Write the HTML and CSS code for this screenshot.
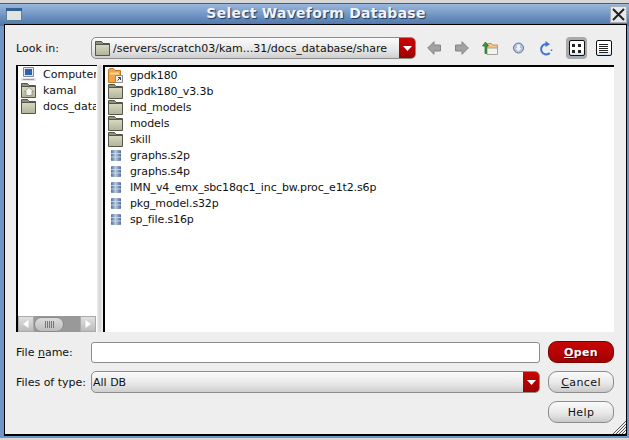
FILE: index.html
```html
<!DOCTYPE html>
<html lang="en">
<head>
  <meta charset="UTF-8">
  <title>Select Waveform Database</title>
  <link rel="stylesheet" href="styles.css">
</head>
<body>
  <svg class="defs" width="0" height="0">
    <defs>
      <linearGradient id="folderFill" x1="0" y1="0" x2="0" y2="1">
        <stop offset="0" stop-color="#d6d7bf"/>
        <stop offset="1" stop-color="#b3b59a"/>
      </linearGradient>
      <linearGradient id="dbFill" x1="0" y1="0" x2="1" y2="0">
        <stop offset="0" stop-color="#4d6c96"/>
        <stop offset=".45" stop-color="#b9cbe0"/>
        <stop offset="1" stop-color="#4d6c96"/>
      </linearGradient>
    </defs>
    <symbol id="folder" viewBox="0 0 15 15">
      <path d="M.5 14.500V.5h6l1.500 2h6.500v12z" fill="#8f9080" stroke="#55564a"/>
      <path d="M1 4h13v10H1z" fill="url(#folderFill)"/>
      <path d="M1 3.500h13" stroke="#55564a"/>
    </symbol>
    <symbol id="db" viewBox="0 0 10 11">
      <path d="M0 .5C0-.2 10-.2 10 .5v10c0 .7-10 .7-10 0z" fill="url(#dbFill)"/>
      <path d="M0 3.500h10M0 7h10" stroke="#d3deea" stroke-width=".8"/>
    </symbol>
    <symbol id="caret" viewBox="0 0 9 5">
      <path d="M0 0h9L4.500 5z" fill="#fff"/>
    </symbol>
  </svg>

  <div class="window">
    <div class="titlebar">
      <svg class="win-icon" width="16" height="13" viewBox="0 0 16 13">
        <path d="M.5.500h15v12H.5z" fill="#dfe5e0" stroke="#5f7f9f"/>
        <path d="M0 0h16v3H0z" fill="#34608f"/>
      </svg>
      <span class="title">Select Waveform Database</span>
      <span class="close">
        <svg width="13" height="13" viewBox="0 0 13 13"><path d="M1 1l11 11M12 1L1 12" stroke="#222" stroke-width="2"/></svg>
      </span>
    </div>

    <div class="dialog">
      <div class="toolbar">
        <label class="label lookin-label">Look in:</label>
        <div class="combo path-combo">
          <svg class="combo-folder" width="15" height="15"><use href="#folder"/></svg>
          <span class="combo-text">/servers/scratch03/kam...31/docs_database/share</span>
          <span class="combo-arrow"><svg width="9" height="5"><use href="#caret"/></svg></span>
        </div>
        <div class="tools">
          <span class="tool">
            <svg width="14" height="14" viewBox="0 0 14 14"><path d="M.7 7L7 .7V4h6.500v6H7v3.300z" fill="#a2a2a2" stroke="#858585"/></svg>
          </span>
          <span class="tool">
            <svg width="14" height="14" viewBox="0 0 14 14"><path d="M13.300 7L7 .7V4H.5v6H7v3.300z" fill="#a2a2a2" stroke="#858585"/></svg>
          </span>
          <span class="tool">
            <svg width="16" height="13" viewBox="0 0 16 13">
              <path d="M5.500 1.500h4l1 1.500h5v9h-10z" fill="#f3c486" stroke="#b09a7a"/>
              <path d="M5 6h10.500v6.500H5z" fill="#f3f3ee" stroke="#a5a59a"/>
              <path d="M3 11.500V4H.5L3.500 0 6.500 4H4.500v7.500z" fill="#3e9a35" stroke="#1f6b1c" stroke-width=".7"/>
            </svg>
          </span>
          <span class="tool">
            <svg width="11" height="12" viewBox="0 0 11 12">
              <circle cx="5.500" cy="6" r="5" fill="#b4c2da" stroke="#5f76a0"/>
              <path d="M4 2.500h3v3.500h1.500L5.500 9.500 2.500 6H4z" fill="#eef1f7"/>
            </svg>
          </span>
          <span class="tool">
            <svg width="14" height="15" viewBox="0 0 14 15">
              <path d="M10.800 12A5.200 5.200 0 1 1 7.500 3" fill="none" stroke="#3f74d2" stroke-width="2"/>
              <path d="M6.500 0l4.500 3.200L6.500 6z" fill="#3f74d2"/>
              <path d="M12.500 8.500v1.500" stroke="#3f74d2" stroke-width="1.500"/>
            </svg>
          </span>
          <span class="view-btn active">
            <span class="view-inner">
              <svg width="11" height="11" viewBox="0 0 11 11"><path d="M1 1h3v3H1zM7 1h3v3H7zM1 7h3v3H1zM7 7h3v3H7z" fill="#222"/></svg>
            </span>
          </span>
          <span class="view-btn">
            <span class="view-inner">
              <svg width="11" height="11" viewBox="0 0 11 11"><path d="M1 1.500h9M1 3.500h9M1 5.500h9M1 7.500h9M1 9.500h9" stroke="#222"/></svg>
            </span>
          </span>
        </div>
      </div>

      <div class="browser">
        <div class="places">
          <ul class="places-list">
            <li class="row">
              <svg class="row-icon" width="15" height="15" viewBox="0 0 15 15">
                <path d="M2.500 .5h10v9h-10z" fill="#dfe5ee" stroke="#7d8ba0"/>
                <path d="M4 2h7v6H4z" fill="#2e62ad"/>
                <path d="M0 11h15v3H0z" fill="#e4e4e4"/>
                <path d="M2 12.500h11" stroke="#999"/>
              </svg>
              <span class="clip">Computer</span>
            </li>
            <li class="row">
              <svg class="row-icon" width="15" height="15"><use href="#folder"/></svg>
              <svg class="home-mark" width="10" height="9" viewBox="0 0 10 9"><path d="M5 .5L9.500 4.500H8V8.500H2V4.500H.5z" fill="#f4f4ef" stroke="#77786a" stroke-width=".6"/></svg>
              <span class="clip">kamal</span>
            </li>
            <li class="row">
              <svg class="row-icon" width="15" height="15"><use href="#folder"/></svg>
              <span class="clip">docs_database</span>
            </li>
          </ul>
          <div class="hscroll">
            <span class="scroll-btn"><svg width="6" height="8" viewBox="0 0 6 8"><path d="M5.500 0v8L0 4z" fill="#fff"/></svg></span>
            <span class="scroll-track"><span class="scroll-thumb"><span class="grip"></span></span></span>
            <span class="scroll-btn"><svg width="6" height="8" viewBox="0 0 6 8"><path d="M.5 0v8L6 4z" fill="#fff"/></svg></span>
          </div>
        </div>
        <div class="splitter"></div>
        <ul class="files">
          <li class="row">
            <svg class="row-icon" width="15" height="15" viewBox="0 0 15 15">
              <path d="M.5 14.500V1.500L1.500.5h4L7 2.500h5.500v12z" fill="#f0a54a" stroke="#c47a1f"/>
              <path d="M2 4.500h9v2H2z" fill="#fbd9a8"/>
              <path d="M7.500 7.500h7v7h-7z" fill="#f2f2f2" stroke="#8a8a8a"/>
              <path d="M9.500 12.500l3-3M10 9.500h2.500V12" stroke="#444" fill="none"/>
            </svg>
            gpdk180
          </li>
          <li class="row"><svg class="row-icon" width="15" height="15"><use href="#folder"/></svg>gpdk180_v3.3b</li>
          <li class="row"><svg class="row-icon" width="15" height="15"><use href="#folder"/></svg>ind_models</li>
          <li class="row"><svg class="row-icon" width="15" height="15"><use href="#folder"/></svg>models</li>
          <li class="row"><svg class="row-icon" width="15" height="15"><use href="#folder"/></svg>skill</li>
          <li class="row"><span class="db-cell"><svg width="10" height="11"><use href="#db"/></svg></span>graphs.s2p</li>
          <li class="row"><span class="db-cell"><svg width="10" height="11"><use href="#db"/></svg></span>graphs.s4p</li>
          <li class="row"><span class="db-cell"><svg width="10" height="11"><use href="#db"/></svg></span>IMN_v4_emx_sbc18qc1_inc_bw.proc_e1t2.s6p</li>
          <li class="row"><span class="db-cell"><svg width="10" height="11"><use href="#db"/></svg></span>pkg_model.s32p</li>
          <li class="row"><span class="db-cell"><svg width="10" height="11"><use href="#db"/></svg></span>sp_file.s16p</li>
        </ul>
      </div>

      <div class="form">
        <label class="label">File <u>n</u>ame:</label>
        <input class="name-input" type="text">
        <button class="btn btn-primary"><u>O</u>pen</button>

        <label class="label">Files of type:</label>
        <div class="combo type-combo">
          <span class="combo-text">All DB</span>
          <span class="combo-arrow"><svg width="9" height="5"><use href="#caret"/></svg></span>
        </div>
        <button class="btn"><u>C</u>ancel</button>

        <button class="btn btn-help">Help</button>
      </div>
      <svg class="resize" width="14" height="13" viewBox="0 0 14 13"><path d="M14 0L1 13M14 3L4 13M14 6l-7 7M14 9l-4 4M14 12l-1 1" stroke="#555" fill="none"/></svg>
    </div>
  </div>
</body>
</html>
```
FILE: styles.css
```css
* {
  box-sizing: border-box;
}

html, body {
  margin: 0;
  height: 100%;
}

body {
  font-family: "DejaVu Sans", sans-serif;
  font-size: 11px;
  color: #111;
  background: #d8d8d8;
  overflow: hidden;
}

.defs {
  position: absolute;
}

.window {
  height: 435px;
  margin-top: 3px;
  display: flex;
  flex-direction: column;
  background: linear-gradient(#9ab7dd, #4a74a8 22px, #6f97c6 22px);
  padding: 0 2px 2px 4px;
  border-top: 1px solid #3f5f88;
}

.titlebar {
  height: 20px;
  flex: none;
  display: flex;
  align-items: center;
  padding: 0 0 0 2px;
}

.win-icon {
  flex: none;
}

.title {
  flex: 1;
  text-align: center;
  font-size: 14px;
  font-weight: bold;
  letter-spacing: .25px;
  color: #f0f4fa;
  text-shadow: 1px 1px 1px #1f3557;
  margin-bottom: 2px;
}

.close {
  width: 17px;
  height: 17px;
  margin-top: 1px;
  flex: none;
  display: flex;
  align-items: center;
  justify-content: center;
  background: #e6e8eb;
  border: 1px solid #a5adb7;
}

.dialog {
  position: relative;
  width: 623px;
  height: 412px;
  background: #eee;
  border: 1px solid #000;
  border-width: 1px 1px 2px 1px;
  padding: 12px 12px 0 11px;
}

.toolbar {
  display: flex;
  align-items: center;
  height: 22px;
}

.label {
  display: block;
}

.lookin-label {
  width: 75px;
  flex: none;
}

.combo {
  display: flex;
  align-items: center;
  height: 22px;
  border: 1px solid #8c8c8c;
  border-radius: 5px;
  background: linear-gradient(#fafafa, #e9e9e9 55%, #cfcfcf);
  overflow: hidden;
}

.path-combo {
  width: 325px;
  flex: none;
  padding-left: 3px;
}

.combo-folder {
  flex: none;
  margin-right: 3px;
}

.combo-text {
  flex: 1;
  white-space: nowrap;
  overflow: hidden;
}

.combo-arrow {
  width: 16px;
  height: 100%;
  flex: none;
  display: flex;
  align-items: center;
  justify-content: center;
  background: linear-gradient(#c80404, #9c0000);
}

.tools {
  flex: 1;
  display: flex;
  align-items: center;
  padding-left: 4px;
}

.tool {
  width: 28px;
  flex: none;
  display: flex;
  justify-content: center;
}

.view-btn {
  width: 21px;
  height: 22px;
  flex: none;
  display: flex;
  align-items: center;
  justify-content: center;
  margin: 0 0 0 6px;
  border-radius: 4px;
}

.view-btn.active {
  background: #a9a9a9;
}

.view-inner {
  width: 16px;
  height: 16px;
  display: flex;
  align-items: center;
  justify-content: center;
  background: linear-gradient(#fff 70%, #cfe0f5);
  border: 1px solid #111;
  border-radius: 2px;
}

.browser {
  display: flex;
  height: 267px;
  margin-top: 6px;
}

.places {
  width: 81px;
  flex: none;
  display: flex;
  flex-direction: column;
  background: #fff;
  border-left: 2px solid #000;
  border-top: 1px solid #000;
}

.places-list {
  flex: 1;
  list-style: none;
  margin: 0 1px 0 0;
  padding: 0 0 0 3px;
  overflow: hidden;
}

.files {
  flex: 1;
  list-style: none;
  margin: 0;
  padding: 0 0 0 3px;
  letter-spacing: -.12px;
  background: #fff;
  border-left: 2px solid #000;
  border-top: 2px solid #000;
}

.row {
  position: relative;
  display: flex;
  align-items: center;
  height: 16px;
  white-space: nowrap;
}

.row-icon {
  flex: none;
  margin-right: 7px;
}

.clip {
  overflow: hidden;
}

.home-mark {
  position: absolute;
  left: 3px;
  top: 5px;
}

.db-cell {
  width: 22px;
  flex: none;
  padding-left: 3px;
  display: flex;
}

.splitter {
  width: 6px;
  flex: none;
  background: linear-gradient(90deg, #eee, #d4d4d4 50%, #f4f4f4);
}

.hscroll {
  display: flex;
  height: 16px;
  flex: none;
  margin-right: 1px;
}

.scroll-btn {
  width: 16px;
  flex: none;
  display: flex;
  align-items: center;
  justify-content: center;
  background: linear-gradient(#e0e0e0, #bbb);
  border: 1px solid #aaa;
}

.scroll-track {
  flex: 1;
  background: #999;
  display: flex;
  align-items: center;
}

.scroll-thumb {
  width: 30px;
  height: 15px;
  display: flex;
  align-items: center;
  justify-content: center;
  background: linear-gradient(#ddd, #bcbcbc);
  border: 1px solid #8a8a8a;
  border-radius: 8px;
}

.grip {
  width: 9px;
  height: 7px;
  background: repeating-linear-gradient(90deg, #777 0 1px, transparent 1px 2px);
}

.form {
  display: grid;
  grid-template-columns: 67px 449px 66px;
  grid-auto-rows: 22px;
  gap: 8px;
  align-items: center;
  margin-top: 9px;
}

.form .label {
  white-space: nowrap;
}

.name-input {
  height: 21px;
  width: 449px;
  margin: 0;
  background: #fff;
  border: 1px solid #8c8c8c;
  border-radius: 3px;
}

.type-combo {
  padding-left: 1px;
}

.btn {
  height: 22px;
  width: 66px;
  padding: 0;
  font: inherit;
  letter-spacing: .4px;
  color: #111;
  background: linear-gradient(#fafafa, #e9e9e9 55%, #c9c9c9);
  border: 1px solid #8c8c8c;
  border-radius: 9px;
}

.btn-primary {
  color: #fff;
  font-weight: bold;
  text-shadow: 1px 1px 0 #5a0000;
  background: linear-gradient(#c80505, #a50000);
  border-color: #7a0000;
}

.btn-help {
  grid-column: 3;
}

.resize {
  position: absolute;
  right: 0;
  bottom: 0;
}
```
